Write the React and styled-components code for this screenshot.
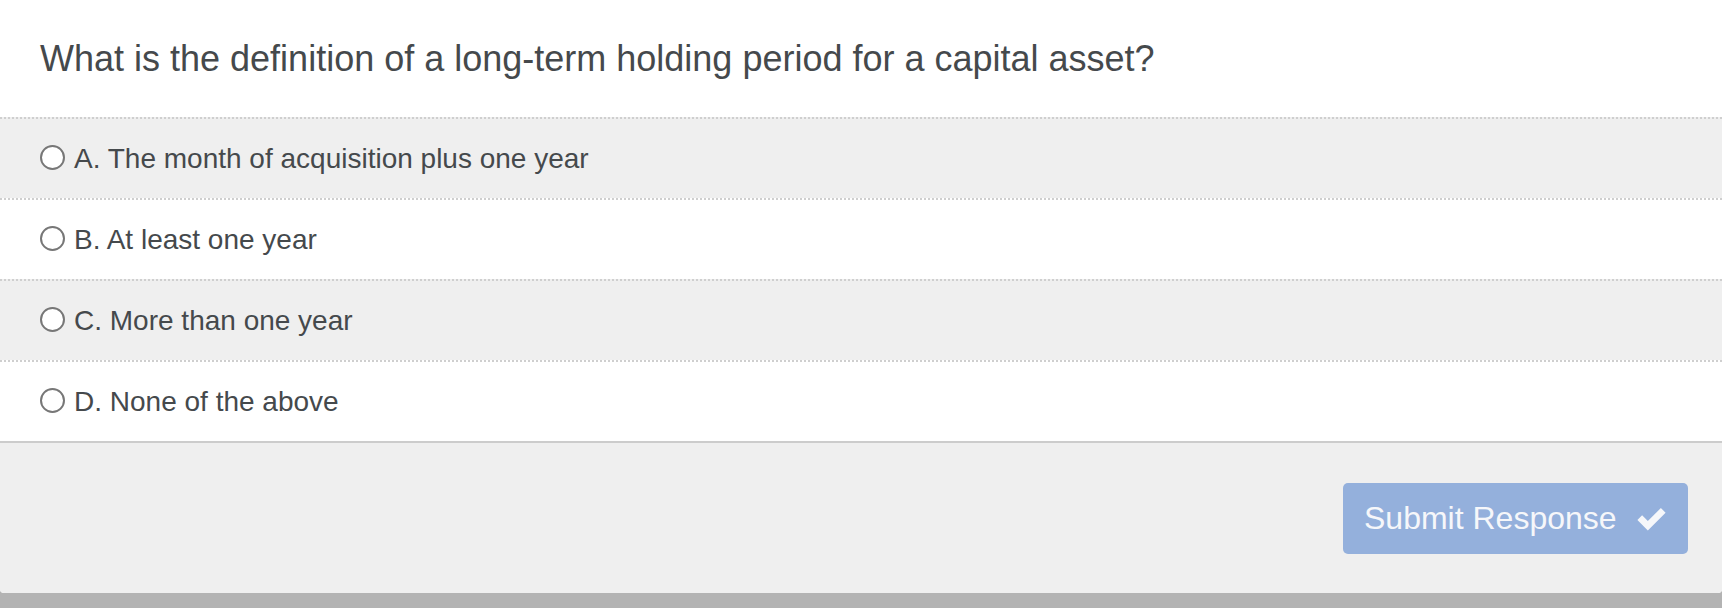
import styled, { createGlobalStyle } from "styled-components";

const GlobalStyle = createGlobalStyle`
  html, body {
    margin: 0;
    padding: 0;
    background: #b3b3b3;
  }
  body {
    font-family: "Liberation Sans", Arial, sans-serif;
    color: #45494c;
  }
`;

const Card = styled.div`
  width: 100%;
  background: #fff;
  border-radius: 0 0 4px 4px;
  overflow: hidden;
`;

const Question = styled.h2`
  margin: 0;
  height: 117px;
  display: flex;
  align-items: center;
  padding: 0 40px;
  box-sizing: border-box;
  font-size: 36px;
  font-weight: 400;
  color: #45494c;
`;

const OptionList = styled.div`
  display: flex;
  flex-direction: column;
`;

const OptionRow = styled.label`
  height: 81px;
  box-sizing: border-box;
  border-top: 2px dotted #cfcfcf;
  background: ${(p) => (p.$shaded ? "#efefef" : "#fff")};
  display: flex;
  align-items: center;
  padding: 0 0 0 40px;
  gap: 9px;
  font-size: 28px;
  color: #45494c;
  cursor: pointer;
`;

const Radio = styled.input.attrs({ type: "radio" })`
  appearance: none;
  margin: 0;
  width: 25px;
  height: 25px;
  border: 2px solid #777;
  border-radius: 50%;
  background: #fff;
  box-sizing: border-box;
  flex-shrink: 0;
  position: relative;
  top: -1px;
`;

const Footer = styled.div`
  border-top: 2px solid #cccccc;
  background: #efefef;
  height: 152px;
  box-sizing: border-box;
  display: flex;
  justify-content: flex-end;
  align-items: flex-start;
  padding: 40px 34px 0 0;
`;

const SubmitButton = styled.button`
  width: 345px;
  height: 71px;
  border: none;
  border-radius: 5px;
  background: #94b0dc;
  color: #f6f7fa;
  font-family: "Liberation Sans", Arial, sans-serif;
  font-size: 32px;
  display: flex;
  align-items: center;
  justify-content: space-between;
  padding: 0 21px 0 21px;
  box-sizing: border-box;
  cursor: not-allowed;
`;

const options = [
  "A. The month of acquisition plus one year",
  "B. At least one year",
  "C. More than one year",
  "D. None of the above",
];

function CheckIcon() {
  return (
    <svg width="31" height="24" viewBox="0 0 29 23" aria-hidden="true">
      <path
        d="M1 12.5 L5.5 8 L11 13.5 L23.5 1 L28 5.5 L11 22.5 Z"
        fill="#f6f7fa"
      />
    </svg>
  );
}

export default function App() {
  return (
    <>
      <GlobalStyle />
      <Card>
        <Question>
          What is the definition of a long-term holding period for a capital asset?
        </Question>
        <OptionList>
          {options.map((text, i) => (
            <OptionRow key={text} $shaded={i % 2 === 0}>
              <Radio name="answer" />
              {text}
            </OptionRow>
          ))}
        </OptionList>
        <Footer>
          <SubmitButton disabled>
            Submit Response
            <CheckIcon />
          </SubmitButton>
        </Footer>
      </Card>
    </>
  );
}
